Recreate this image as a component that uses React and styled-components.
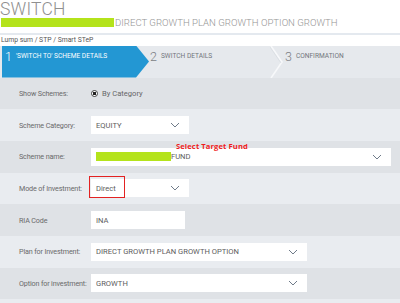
import React from 'react';
import styled, { createGlobalStyle } from 'styled-components';

const GlobalStyle = createGlobalStyle`
    body {
        margin: 0;
        background: #fff;
        font-family: Roboto, "Liberation Sans", sans-serif;
    }
`;

const Chevron = () => (
    <svg width="10" height="6" viewBox="0 0 10 6">
        <path d="M1 1 L5 5 L9 1" fill="none" stroke="#6f7b89" strokeWidth="1" />
    </svg>
);

const StepDivider = () => (
    <svg width="14" height="32" viewBox="0 0 14 32">
        <path d="M1 0 L12 16 L1 32" fill="none" stroke="#f7f8fa" strokeWidth="1.6" />
        <path d="M0 1 L11 17" fill="none" stroke="#d4d8dd" strokeWidth="0.6" />
    </svg>
);

const Select = ({ width, children }) => (
    <Field width={width}>
        <FieldText>{children}</FieldText>
        <ChevronSlot>
            <Chevron />
        </ChevronSlot>
    </Field>
);

export default function App() {
    return (
        <Page>
            <GlobalStyle />
            <Title>SWITCH</Title>
            <SubTitle>
                <Redacted width={113} />
                DIRECT GROWTH PLAN GROWTH OPTION GROWTH
            </SubTitle>
            <Divider />
            <Crumb>Lump sum / STP / Smart STeP</Crumb>
            <Steps>
                <ActiveStep>
                    <StepNum>1</StepNum>
                    <StepLabel>'SWITCH TO' SCHEME DETAILS</StepLabel>
                </ActiveStep>
                <Step width={120}>
                    <StepNum dim>2</StepNum>
                    <StepLabel dim>SWITCH DETAILS</StepLabel>
                </Step>
                <StepDivider />
                <Step>
                    <StepNum dim>3</StepNum>
                    <StepLabel dim>CONFIRMATION</StepLabel>
                </Step>
            </Steps>
            <Form>
                <Row dark>
                    <Label>Show Schemes:</Label>
                    <Radio>
                        <Dot />
                        By Category
                    </Radio>
                </Row>
                <Row>
                    <Label>Scheme Category:</Label>
                    <Select width={98}>EQUITY</Select>
                </Row>
                <Row dark>
                    <Label>Scheme name:</Label>
                    <Field width={300}>
                        <FieldText>
                            <Redacted width={75} small />
                            FUND
                        </FieldText>
                        <ChevronSlot>
                            <Chevron />
                        </ChevronSlot>
                    </Field>
                    <Note>Select Target Fund</Note>
                </Row>
                <Row>
                    <Label>Mode of Investment:</Label>
                    <Anchor>
                        <Select width={98}>Direct</Select>
                        <Highlight />
                    </Anchor>
                </Row>
                <Row dark>
                    <Label>RIA Code</Label>
                    <Field width={94}>
                        <FieldText>INA</FieldText>
                    </Field>
                </Row>
                <Row>
                    <Label>Plan for Investment:</Label>
                    <Select width={216}>DIRECT GROWTH PLAN GROWTH OPTION</Select>
                </Row>
                <Row dark>
                    <Label>Option for investment:</Label>
                    <Select width={216}>GROWTH</Select>
                </Row>
                <Row />
            </Form>
        </Page>
    );
}

const Page = styled.div`
    width: 400px;
    height: 303px;
    overflow: hidden;
    background: #fff;
`;

const Title = styled.div`
    font-size: 17.5px;
    font-weight: 300;
    color: #909090;
    line-height: 18px;
    letter-spacing: 0.2px;
`;

const SubTitle = styled.div`
    display: flex;
    align-items: center;
    height: 10px;
    padding-left: 1px;
    font-size: 9.6px;
    font-weight: 300;
    color: #959595;
    margin-top: -0.5px;
`;

const Redacted = styled.span`
    display: inline-block;
    width: ${(p) => p.width}px;
    height: ${(p) => (p.small ? 9 : 9.5)}px;
    background: #b4e31b;
    margin-right: ${(p) => (p.small ? 0 : 1)}px;
`;

const Divider = styled.div`
    height: 2px;
    margin-top: 5px;
    background: #e4e9ef;
`;

const Crumb = styled.div`
    font-size: 6.8px;
    color: #555;
    height: 11px;
    line-height: 11px;
    padding-left: 1px;
`;

const Steps = styled.div`
    display: flex;
    align-items: stretch;
    height: 32px;
    background: #e6e9ed;
`;

const ActiveStep = styled.div`
    display: flex;
    align-items: flex-start;
    width: 147px;
    margin-left: 2px;
    padding: 4px 0 0 3px;
    box-sizing: border-box;
    background: #2397d3;
    clip-path: polygon(0 0, 134px 0, 147px 50%, 134px 100%, 0 100%);
`;

const Step = styled.div`
    display: flex;
    align-items: flex-start;
    width: ${(p) => (p.width ? `${p.width}px` : 'auto')};
    padding: 4px 0 0 1px;
`;

const StepNum = styled.span`
    font-size: 12.5px;
    font-weight: 300;
    line-height: 14px;
    color: ${(p) => (p.dim ? '#7c7f84' : '#fff')};
    margin-right: 4px;
`;

const StepLabel = styled.span`
    font-size: 6.6px;
    line-height: 10px;
    padding-top: 1px;
    color: ${(p) => (p.dim ? '#72767c' : '#fff')};
`;

const Form = styled.div`
    display: flex;
    flex-direction: column;
`;

const Row = styled.div`
    position: relative;
    display: flex;
    align-items: center;
    height: 31.7px;
    flex-shrink: 0;
    background: ${(p) => (p.dark ? '#dfe2e6' : '#e9ecf0')};
`;

const Label = styled.div`
    width: 72px;
    padding-left: 19px;
    flex-shrink: 0;
    font-size: 7.2px;
    letter-spacing: -0.15px;
    color: #6a6a6a;
    white-space: nowrap;
`;

const Field = styled.div`
    display: flex;
    align-items: center;
    width: ${(p) => p.width}px;
    height: 18px;
    background: #fff;
    box-sizing: border-box;
    padding: 0 9px 0 5px;
`;

const FieldText = styled.div`
    flex: 1;
    display: flex;
    align-items: center;
    font-size: 7.6px;
    color: #5d5d5d;
    white-space: nowrap;
    overflow: hidden;
`;

const ChevronSlot = styled.div`
    display: flex;
    align-items: center;
`;

const Radio = styled.div`
    display: flex;
    align-items: center;
    font-size: 7.6px;
    color: #666;
`;

const Dot = styled.span`
    width: 5px;
    height: 5px;
    border-radius: 50%;
    border: 1px solid #444;
    background: radial-gradient(circle, #222 0 1.6px, #fff 2px);
    margin-right: 4px;
`;

const Note = styled.div`
    position: absolute;
    left: 176px;
    top: 0px;
    font-family: "Open Sans", "Liberation Sans", sans-serif;
    font-weight: 700;
    font-size: 7.6px;
    color: #f01c1c;
    letter-spacing: 0.1px;
`;

const Anchor = styled.div`
    position: relative;
`;

const Highlight = styled.div`
    position: absolute;
    left: -2px;
    top: -3px;
    width: 36px;
    height: 22px;
    box-sizing: border-box;
    border: 1.4px solid #e32222;
`;
